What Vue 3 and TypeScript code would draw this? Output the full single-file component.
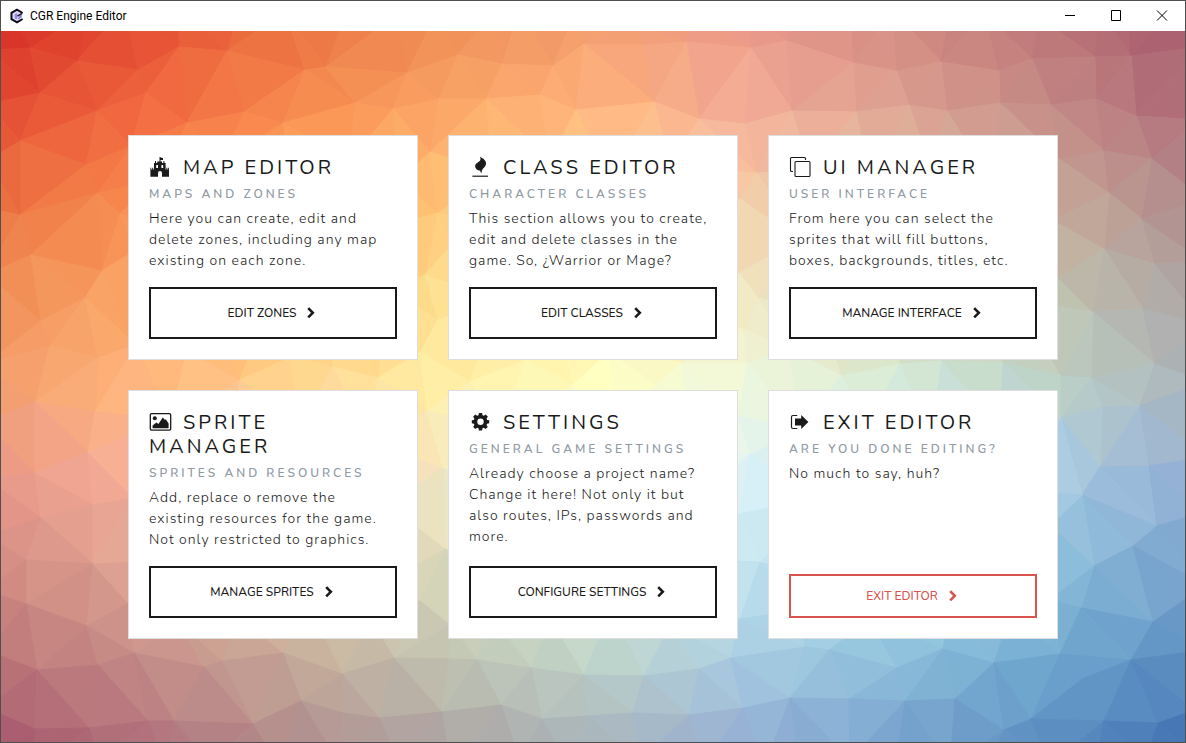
<script setup lang="ts">
type IconName = 'castle' | 'flame' | 'windows' | 'image' | 'gear' | 'exit'

interface Card {
  icon: IconName
  title: string
  subtitle: string
  text: string
  action: string
  danger?: boolean
}

const cards: Card[] = [
  {
    icon: 'castle',
    title: 'Map Editor',
    subtitle: 'Maps and zones',
    text: 'Here you can create, edit and delete zones, including any map existing on each zone.',
    action: 'Edit zones',
  },
  {
    icon: 'flame',
    title: 'Class Editor',
    subtitle: 'Character classes',
    text: 'This section allows you to create, edit and delete classes in the game. So, ¿Warrior or Mage?',
    action: 'Edit classes',
  },
  {
    icon: 'windows',
    title: 'UI Manager',
    subtitle: 'User interface',
    text: 'From here you can select the sprites that will fill buttons, boxes, backgrounds, titles, etc.',
    action: 'Manage interface',
  },
  {
    icon: 'image',
    title: 'Sprite Manager',
    subtitle: 'Sprites and resources',
    text: 'Add, replace o remove the existing resources for the game. Not only restricted to graphics.',
    action: 'Manage sprites',
  },
  {
    icon: 'gear',
    title: 'Settings',
    subtitle: 'General game settings',
    text: 'Already choose a project name? Change it here! Not only it but also routes, IPs, passwords and more.',
    action: 'Configure settings',
  },
  {
    icon: 'exit',
    title: 'Exit Editor',
    subtitle: 'Are you done editing?',
    text: 'No much to say, huh?',
    action: 'Exit editor',
    danger: true,
  },
]

/* ---- Low-poly backdrop: Delaunay mesh coloured by an x/y gradient ---- */

type Point = [number, number]
type Triple = [number, number, number]

const meshPoints: Point[] = [
  // beyond the top edge
  [-20, 12], [15, 20], [88, 12], [124, 8], [179, 10], [236, 18], [285, 12], [350, 4], [398, 14], [437, 12],
  [490, 16], [520, 10], [575, 14], [632, 22], [700, 12], [748, 14], [790, 16], [850, 12], [893, 10], [950, 12],
  [985, 14], [1040, 18], [1100, 12], [1128, 8], [1165, 18], [1205, 10],
  // top rows
  [-12, 50], [30, 48], [77, 61], [138, 70], [179, 47], [227, 51], [305, 70], [326, 67], [407, 73], [458, 55],
  [502, 64], [553, 66], [584, 44], [644, 45], [686, 42], [751, 48], [787, 41], [853, 63], [897, 71], [941, 62],
  [999, 71], [1032, 59], [1095, 57], [1131, 56], [1200, 47],
  [-12, 104], [40, 93], [97, 111], [146, 93], [187, 123], [244, 112], [283, 123], [355, 103], [393, 109],
  [439, 99], [486, 99], [540, 95], [576, 110], [654, 102], [699, 119], [745, 124], [792, 111], [856, 112],
  [909, 105], [947, 111], [1000, 103], [1051, 105], [1096, 99], [1136, 116], [1200, 120],
  // left side
  [20, 141], [86, 165], [131, 146], [-12, 160], [20, 215], [98, 193], [120, 213], [-14, 208], [31, 255],
  [102, 271], [-14, 275], [85, 298], [41, 321], [136, 250], [50, 346], [-14, 364], [98, 358], [136, 345],
  // behind the upper cards
  [160, 180], [220, 165], [290, 175], [350, 160], [400, 180], [180, 240], [250, 230], [310, 245], [370, 230],
  [200, 300], [270, 300], [330, 310], [390, 290], [490, 170], [550, 160], [610, 175], [670, 165], [510, 230],
  [570, 245], [640, 230], [700, 240], [500, 300], [560, 310], [630, 300], [690, 310], [810, 170], [870, 180],
  [930, 165], [990, 180], [800, 240], [870, 235], [940, 250], [1010, 240], [820, 310], [880, 300], [950, 310], [1020, 300],
  [430, 152], [438, 213], [450, 247], [425, 275], [438, 320],
  [757, 173], [740, 199], [739, 273], [758, 298], [745, 330],
  // row between the cards
  [187, 352], [240, 380], [291, 357], [333, 367], [378, 378], [420, 352], [470, 382], [526, 360], [572, 386],
  [608, 352], [656, 385], [682, 363], [747, 363], [790, 349], [841, 376], [900, 364], [942, 361], [1003, 363],
  // right side
  [1104, 151], [1059, 159], [1152, 159], [1109, 193], [1142, 219], [1104, 249], [1052, 220], [1155, 264],
  [1058, 278], [1143, 309], [1093, 312], [1155, 364], [1091, 378], [1061, 376], [1205, 200], [1205, 262],
  [1205, 325], [1205, 382],
  [1102, 407], [1140, 406], [1061, 418], [1100, 467], [1149, 466], [1082, 495], [1157, 526], [1133, 546],
  [1094, 566], [1050, 525], [1081, 608], [1153, 622], [1050, 600], [1205, 457], [1205, 512], [1205, 585], [1205, 650],
  // left side, lower half
  [35, 402], [95, 412], [-14, 422], [35, 473], [88, 452], [-14, 478], [93, 505], [41, 518], [-14, 535],
  [134, 498], [26, 560], [93, 564], [-14, 590], [26, 604], [87, 626], [128, 603], [-14, 650],
  // behind the lower cards
  [170, 420], [230, 440], [300, 425], [370, 440], [180, 490], [250, 500], [320, 490], [390, 505], [190, 560],
  [260, 570], [330, 560], [390, 580], [180, 625], [240, 620], [310, 610], [370, 620],
  [500, 430], [560, 440], [620, 425], [690, 440], [510, 500], [580, 495], [640, 505], [700, 500], [500, 570],
  [570, 560], [640, 570], [700, 560], [490, 615], [550, 620], [610, 610], [670, 625],
  [800, 430], [870, 420], [930, 440], [1000, 430], [810, 500], [880, 490], [950, 500], [1010, 490], [810, 570],
  [880, 560], [940, 570], [1010, 560], [800, 610], [870, 620], [950, 610], [1010, 615],
  [427, 411], [443, 468], [446, 549], [420, 601], [450, 625],
  [738, 416], [750, 454], [739, 514], [760, 562], [740, 619],
  // bottom rows
  [37, 670], [98, 665], [134, 653], [204, 667], [222, 661], [283, 653], [342, 674], [394, 658], [449, 659],
  [477, 660], [531, 668], [584, 675], [644, 676], [699, 669], [731, 658], [805, 647], [829, 650], [897, 668],
  [943, 649], [994, 663], [1060, 654], [1131, 660], [1082, 679],
  [-14, 708], [35, 729], [89, 728], [148, 721], [174, 721], [253, 724], [301, 701], [343, 713], [379, 718],
  [442, 712], [501, 705], [542, 719], [588, 716], [633, 713], [689, 715], [743, 708], [790, 698], [849, 699],
  [905, 701], [955, 699], [1004, 730], [1031, 719], [1104, 721], [1158, 723], [1195, 710],
  [-14, 765], [30, 770], [100, 765], [165, 770], [210, 765], [280, 770], [340, 765], [400, 765], [450, 770],
  [520, 760], [570, 770], [640, 760], [700, 770], [765, 765], [800, 770], [850, 760], [895, 770], [950, 765],
  [985, 770], [1050, 765], [1095, 770], [1145, 762], [1205, 768],
]

function triangulate(points: Point[]): Triple[] {
  const n = points.length
  const pts: Point[] = [...points, [-9000, -9000], [9000, -9000], [0, 18000]]
  let triangles: Triple[] = [[n, n + 1, n + 2]]

  const inCircle = (t: Triple, p: Point): boolean => {
    const [ax, ay] = pts[t[0]]
    const [bx, by] = pts[t[1]]
    const [cx, cy] = pts[t[2]]
    const d = 2 * (ax * (by - cy) + bx * (cy - ay) + cx * (ay - by))
    const a2 = ax * ax + ay * ay
    const b2 = bx * bx + by * by
    const c2 = cx * cx + cy * cy
    const ux = (a2 * (by - cy) + b2 * (cy - ay) + c2 * (ay - by)) / d
    const uy = (a2 * (cx - bx) + b2 * (ax - cx) + c2 * (bx - ax)) / d
    return (p[0] - ux) ** 2 + (p[1] - uy) ** 2 < (ax - ux) ** 2 + (ay - uy) ** 2
  }

  for (let i = 0; i < n; i++) {
    const bad = triangles.filter((t) => inCircle(t, pts[i]))
    const edges = new Map<string, Point>()
    for (const t of bad) {
      for (const [a, b] of [[t[0], t[1]], [t[1], t[2]], [t[2], t[0]]] as Point[]) {
        const key = a < b ? `${a}-${b}` : `${b}-${a}`
        if (edges.has(key)) edges.delete(key)
        else edges.set(key, [a, b])
      }
    }
    triangles = triangles.filter((t) => !bad.includes(t))
    for (const [a, b] of edges.values()) triangles.push([a, b, i])
  }
  return triangles.filter((t) => t.every((v) => v < n))
}

const palette = ['#d73027', '#f46d43', '#fdae61', '#fee090', '#ffffbf', '#e0f3f8', '#abd9e9', '#74add1', '#4575b4']

function toLab(hex: string): Triple {
  const [r, g, b] = [1, 3, 5]
    .map((i) => parseInt(hex.slice(i, i + 2), 16) / 255)
    .map((c) => (c <= 0.04045 ? c / 12.92 : ((c + 0.055) / 1.055) ** 2.4))
  const f = (v: number) => (v > 0.008856 ? Math.cbrt(v) : 7.787 * v + 16 / 116)
  const x = f((0.4124564 * r + 0.3575761 * g + 0.1804375 * b) / 0.95047)
  const y = f(0.2126729 * r + 0.7151522 * g + 0.072175 * b)
  const z = f((0.0193339 * r + 0.119192 * g + 0.9503041 * b) / 1.08883)
  return [116 * y - 16, 500 * (x - y), 200 * (y - z)]
}

function toRgb([l, a, b]: Triple): string {
  const fy = (l + 16) / 116
  const inv = (v: number) => (v > 0.2068966 ? v ** 3 : (v - 16 / 116) / 7.787)
  const x = 0.95047 * inv(fy + a / 500)
  const y = inv(fy)
  const z = 1.08883 * inv(fy - b / 200)
  const channels = [
    3.2404542 * x - 1.5371385 * y - 0.4985314 * z,
    -0.969266 * x + 1.8760108 * y + 0.041556 * z,
    0.0556434 * x - 0.2040259 * y + 1.0572252 * z,
  ].map((c) => {
    const s = c <= 0.0031308 ? 12.92 * c : 1.055 * c ** (1 / 2.4) - 0.055
    return Math.round(255 * Math.min(1, Math.max(0, s)))
  })
  return `rgb(${channels.join(',')})`
}

const mix = (a: Triple, b: Triple, t: number): Triple => [
  a[0] + (b[0] - a[0]) * t,
  a[1] + (b[1] - a[1]) * t,
  a[2] + (b[2] - a[2]) * t,
]

const labStops = palette.map(toLab)

function sample(t: number): Triple {
  const pos = Math.min(1, Math.max(0, t)) * (labStops.length - 1)
  const i = Math.min(labStops.length - 2, Math.floor(pos))
  return mix(labStops[i], labStops[i + 1], pos - i)
}

const facets = triangulate(meshPoints).map((t) => {
  const corners = t.map((v) => meshPoints[v])
  const cx = (corners[0][0] + corners[1][0] + corners[2][0]) / 3
  const cy = (corners[0][1] + corners[1][1] + corners[2][1]) / 3
  return {
    points: corners.map((c) => c.join(',')).join(' '),
    color: toRgb(mix(sample((cx - 1) / 1184), sample((cy - 31) / 711), 0.5)),
  }
})
</script>

<template>
  <div class="window">
    <header class="titlebar">
      <svg class="logo" viewBox="0 0 16 16" aria-hidden="true">
        <path d="M8 2.6 12.6 5.2 V10.8 L8 13.4 3.4 10.8 V5.2Z" fill="#dcdcf6" />
        <path d="M5.6 6.2 8.2 4.8 V11.6 L5.6 10.4Z" fill="#8f8fe6" />
        <path d="M9 11.4 12.6 9.2 V6.2 L9.6 9.2Z" fill="#7a7ad8" />
        <path d="M13.6 5 8 1.7 2.5 4.9 V11.1 L8 14.3 13.6 11" fill="none" stroke="#0b0b18" stroke-width="2" />
        <path d="M13.2 5.4 8.4 8.2" stroke="#14142c" stroke-width="1.5" />
      </svg>
      <span class="caption">CGR Engine Editor</span>
      <div class="controls">
        <button type="button" aria-label="Minimize">
          <svg viewBox="0 0 12 12"><path d="M1 5.5H11" /></svg>
        </button>
        <button type="button" aria-label="Maximize">
          <svg viewBox="0 0 12 12"><path d="M1.5 .5H10.5V10.5H1.5Z" /></svg>
        </button>
        <button type="button" aria-label="Close">
          <svg viewBox="0 0 12 12"><path d="M1 .5 11 10.5M11 .5 1 10.5" /></svg>
        </button>
      </div>
    </header>

    <main class="stage">
      <svg class="backdrop" viewBox="1 31 1184 711" preserveAspectRatio="none" aria-hidden="true">
        <polygon v-for="(f, i) in facets" :key="i" :points="f.points" :fill="f.color" :stroke="f.color" />
      </svg>

      <div class="cards">
        <section v-for="card in cards" :key="card.title" class="card">
          <h2>
            <svg class="icon" viewBox="0 0 24 24" aria-hidden="true">
              <template v-if="card.icon === 'castle'">
                <path
                  fill-rule="evenodd"
                  d="M10.5 1H11.5V1.6L14 2V4H11.5V5.6H13V7H14.4V5H15.4V7H16.6V13.4H17.4V11.8H18.4V13.4H19.2V11.8H20V20.7H13V17A2 2 0 0 0 9 17V20.7H1.4V11.8H2.2V13.4H3.2V11.8H4.2V13.4H5V7H6V5H7V7H8.2V5.6H10.5ZM7.2 9V12H9V9ZM12.4 9V12H14.2V9Z"
                />
              </template>
              <template v-else-if="card.icon === 'flame'">
                <path d="M10.9 .8C13.6 2.2 16.9 4.2 17 7.2C17.1 9.4 15.8 10.8 14.4 12.2C13.1 13.6 12.5 15 12.6 17.4C11.6 16.4 11.2 15.8 11.2 14.6C8.4 14.6 6 12.6 6.2 10C6.4 6.8 9.4 6.6 11.1 4.4C11.8 3.4 11.6 2.2 10.9 .8Z" />
                <path d="M3.4 19.6H19V20.8H3.4Z" />
              </template>
              <template v-else-if="card.icon === 'windows'">
                <g fill="none" stroke="currentColor" stroke-width="1.1">
                  <path d="M16.5 4V2.5Q16.5 1.5 15.5 1.5H2.5Q1.5 1.5 1.5 2.5V14.5Q1.5 15.5 2.5 15.5H4" />
                  <rect x="6" y="5.5" width="15" height="15" rx="1" />
                </g>
              </template>
              <template v-else-if="card.icon === 'image'">
                <rect x="1.3" y="2.7" width="20.4" height="16.4" rx="1.4" fill="none" stroke="currentColor" stroke-width="1.3" />
                <circle cx="5.8" cy="7.2" r="2" />
                <path d="M3.6 17.2V14.6L7.4 11.6 9.4 13 13.8 6.6 15.8 8.8 17 8.4 19.6 12.4V17.2Z" />
              </template>
              <template v-else-if="card.icon === 'gear'">
                <path
                  fill-rule="evenodd"
                  d="M9.9 2H13.1L13.5 4.3L14.8 4.8L16.7 3.5L18.9 5.7L17.6 7.6L18.1 8.9L20.2 9.2V12.3L18.1 12.7L17.5 14L18.8 15.9L16.6 18L14.8 16.7L13.5 17.3L13.1 19.4H9.9L9.5 17.3L8.2 16.7L6.3 18L4.2 15.9L5.4 14L4.9 12.7L2.8 12.3V9.2L4.9 8.9L5.4 7.6L4.1 5.7L6.3 3.5L8.2 4.8L9.5 4.3ZM11.5 7.5A3.2 3.2 0 1 0 11.5 13.9A3.2 3.2 0 1 0 11.5 7.5Z"
                />
              </template>
              <template v-else>
                <path d="M8.2 4.5H4Q2.5 4.5 2.5 6V16Q2.5 17.5 4 17.5H8.2" fill="none" stroke="currentColor" stroke-width="1.2" />
                <path d="M6 7.4H12.2V4L19.4 11 12.2 18V14.4H6Z" />
              </template>
            </svg>{{ card.title }}
          </h2>
          <h3>{{ card.subtitle }}</h3>
          <p>{{ card.text }}</p>
          <button type="button" class="action" :class="{ danger: card.danger }">
            {{ card.action }}
            <svg class="chevron" viewBox="0 0 12 12" aria-hidden="true"><path d="M2.2 1.2 6.8 5.8 2.2 10.4" /></svg>
          </button>
        </section>
      </div>
    </main>
  </div>
</template>

<style>
body {
  margin: 0;
}
</style>

<style scoped>
.window {
  box-sizing: border-box;
  min-height: 100vh;
  display: flex;
  flex-direction: column;
  border: 1px solid #4f4f4f;
  background: #fff;
  color: #1a1a1a;
  font-family: Nunito, Lato, sans-serif;
}

.titlebar {
  display: flex;
  align-items: center;
  height: 30px;
  padding-left: 8px;
  background: #fff;
}

.logo {
  width: 16px;
  height: 16px;
  margin-right: 5px;
}

.caption {
  color: #000;
  font: 12px/16px "Segoe UI", Roboto, sans-serif;
}

.controls {
  display: flex;
  align-self: stretch;
  margin-left: auto;
}

.controls button {
  display: flex;
  align-items: center;
  justify-content: center;
  width: 46px;
  padding: 0;
  border: 0;
  background: none;
}

.controls svg {
  width: 12px;
  height: 12px;
  fill: none;
  stroke: #000;
}

.stage {
  position: relative;
  flex: 1;
  display: flex;
  align-items: center;
  justify-content: center;
  padding: 30px;
}

.backdrop {
  position: absolute;
  inset: 0;
  width: 100%;
  height: 100%;
}

.cards {
  position: relative;
  display: grid;
  grid-template-columns: repeat(3, 1fr);
  gap: 30px;
  width: 100%;
  max-width: 930px;
}

.card {
  display: flex;
  flex-direction: column;
  padding: 20px;
  border: 1px solid #ddd;
  background: #fff;
}

h2 {
  margin: 0;
  font-size: 20px;
  font-weight: 400;
  line-height: 24px;
  letter-spacing: 3px;
  text-transform: uppercase;
}

.icon {
  width: 24px;
  height: 24px;
  margin-right: 10px;
  vertical-align: top;
  fill: currentColor;
}

h3 {
  margin: 5px 0;
  color: #919ba4;
  font-size: 12px;
  font-weight: 600;
  line-height: 18px;
  letter-spacing: 3px;
  text-transform: uppercase;
}

p {
  margin: 0 0 16px;
  padding-right: 8px;
  color: #1a1a1a;
  font-size: 14px;
  font-weight: 300;
  line-height: 21px;
  letter-spacing: 1px;
}

.action {
  display: flex;
  align-items: center;
  justify-content: center;
  gap: 10px;
  height: 52px;
  margin-top: auto;
  padding: 0 16px;
  border: 2px solid #1a1a1a;
  background: #fff;
  color: #1a1a1a;
  font-family: inherit;
  font-size: 12px;
  font-weight: 500;
  text-transform: uppercase;
}

.action.danger {
  height: 44px;
  border-color: #d9534f;
  color: #d9534f;
}

.chevron {
  width: 12px;
  height: 12px;
  fill: none;
  stroke: currentColor;
  stroke-width: 2.6;
}

@media (max-width: 900px) {
  .cards {
    grid-template-columns: repeat(2, 1fr);
  }
}

@media (max-width: 600px) {
  .cards {
    grid-template-columns: 1fr;
  }
}
</style>
